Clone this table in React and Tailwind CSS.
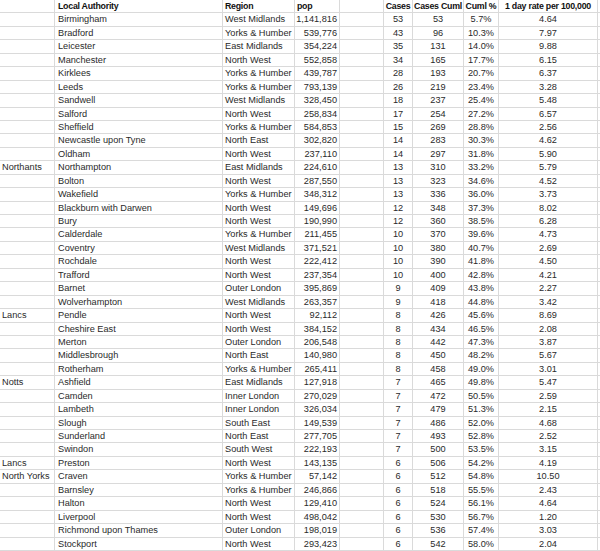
const rows = [
  ["", "Birmingham", "West Midlands", "1,141,816", "53", "53", "5.7%", "4.64"],
  ["", "Bradford", "Yorks & Humber", "539,776", "43", "96", "10.3%", "7.97"],
  ["", "Leicester", "East Midlands", "354,224", "35", "131", "14.0%", "9.88"],
  ["", "Manchester", "North West", "552,858", "34", "165", "17.7%", "6.15"],
  ["", "Kirklees", "Yorks & Humber", "439,787", "28", "193", "20.7%", "6.37"],
  ["", "Leeds", "Yorks & Humber", "793,139", "26", "219", "23.4%", "3.28"],
  ["", "Sandwell", "West Midlands", "328,450", "18", "237", "25.4%", "5.48"],
  ["", "Salford", "North West", "258,834", "17", "254", "27.2%", "6.57"],
  ["", "Sheffield", "Yorks & Humber", "584,853", "15", "269", "28.8%", "2.56"],
  ["", "Newcastle upon Tyne", "North East", "302,820", "14", "283", "30.3%", "4.62"],
  ["", "Oldham", "North West", "237,110", "14", "297", "31.8%", "5.90"],
  ["Northants", "Northampton", "East Midlands", "224,610", "13", "310", "33.2%", "5.79"],
  ["", "Bolton", "North West", "287,550", "13", "323", "34.6%", "4.52"],
  ["", "Wakefield", "Yorks & Humber", "348,312", "13", "336", "36.0%", "3.73"],
  ["", "Blackburn with Darwen", "North West", "149,696", "12", "348", "37.3%", "8.02"],
  ["", "Bury", "North West", "190,990", "12", "360", "38.5%", "6.28"],
  ["", "Calderdale", "Yorks & Humber", "211,455", "10", "370", "39.6%", "4.73"],
  ["", "Coventry", "West Midlands", "371,521", "10", "380", "40.7%", "2.69"],
  ["", "Rochdale", "North West", "222,412", "10", "390", "41.8%", "4.50"],
  ["", "Trafford", "North West", "237,354", "10", "400", "42.8%", "4.21"],
  ["", "Barnet", "Outer London", "395,869", "9", "409", "43.8%", "2.27"],
  ["", "Wolverhampton", "West Midlands", "263,357", "9", "418", "44.8%", "3.42"],
  ["Lancs", "Pendle", "North West", "92,112", "8", "426", "45.6%", "8.69"],
  ["", "Cheshire East", "North West", "384,152", "8", "434", "46.5%", "2.08"],
  ["", "Merton", "Outer London", "206,548", "8", "442", "47.3%", "3.87"],
  ["", "Middlesbrough", "North East", "140,980", "8", "450", "48.2%", "5.67"],
  ["", "Rotherham", "Yorks & Humber", "265,411", "8", "458", "49.0%", "3.01"],
  ["Notts", "Ashfield", "East Midlands", "127,918", "7", "465", "49.8%", "5.47"],
  ["", "Camden", "Inner London", "270,029", "7", "472", "50.5%", "2.59"],
  ["", "Lambeth", "Inner London", "326,034", "7", "479", "51.3%", "2.15"],
  ["", "Slough", "South East", "149,539", "7", "486", "52.0%", "4.68"],
  ["", "Sunderland", "North East", "277,705", "7", "493", "52.8%", "2.52"],
  ["", "Swindon", "South West", "222,193", "7", "500", "53.5%", "3.15"],
  ["Lancs", "Preston", "North West", "143,135", "6", "506", "54.2%", "4.19"],
  ["North Yorks", "Craven", "Yorks & Humber", "57,142", "6", "512", "54.8%", "10.50"],
  ["", "Barnsley", "Yorks & Humber", "246,866", "6", "518", "55.5%", "2.43"],
  ["", "Halton", "North West", "129,410", "6", "524", "56.1%", "4.64"],
  ["", "Liverpool", "North West", "498,042", "6", "530", "56.7%", "1.20"],
  ["", "Richmond upon Thames", "Outer London", "198,019", "6", "536", "57.4%", "3.03"],
  ["", "Stockport", "North West", "293,423", "6", "542", "58.0%", "2.04"],
];

const cell = "h-[13.44px] border-r border-b border-[#dadada] leading-[13.5px] whitespace-nowrap overflow-hidden";

function Row({ r, header }) {
  const weight = header ? "font-bold text-[8.8px] tracking-[-0.25px] text-[#111]" : "";
  return (
    <>
      <div className={`${cell} ${weight} pl-[2px]`}>{r[0]}</div>
      <div className={`${cell} ${weight} pl-[3px]`}>{r[1]}</div>
      <div className={`${cell} ${weight} pl-[2px]`}>{r[2]}</div>
      <div className={`${cell} ${weight} ${header ? "pl-[2px]" : "text-right pr-[2px]"}`}>{r[3]}</div>
      <div className={cell}></div>
      <div className={`${cell} ${weight} text-center`}>{r[4]}</div>
      <div className={`${cell} ${weight} text-center`}>{r[5]}</div>
      <div className={`${cell} ${weight} text-center`}>{r[6]}</div>
      <div className={`${cell} ${weight} text-center`}>{r[7]}</div>
      <div className="h-[13.44px] border-b border-[#dadada]"></div>
    </>
  );
}

export default function App() {
  return (
    <div
      className="w-[600px] h-[551px] bg-white text-[#2a2a2a] text-[9.2px] overflow-hidden"
      style={{ fontFamily: "'Liberation Sans', Arial, sans-serif" }}
    >
      <div className="grid grid-cols-[55px_168px_72px_45px_44px_29px_51px_35px_99px_1fr]">
        <Row header r={["", "Local Authority", "Region", "pop", "Cases", "Cases Cuml", "Cuml %", "1 day rate per 100,000"]} />
        {rows.map((r, i) => (
          <Row key={i} r={r} />
        ))}
      </div>
    </div>
  );
}
